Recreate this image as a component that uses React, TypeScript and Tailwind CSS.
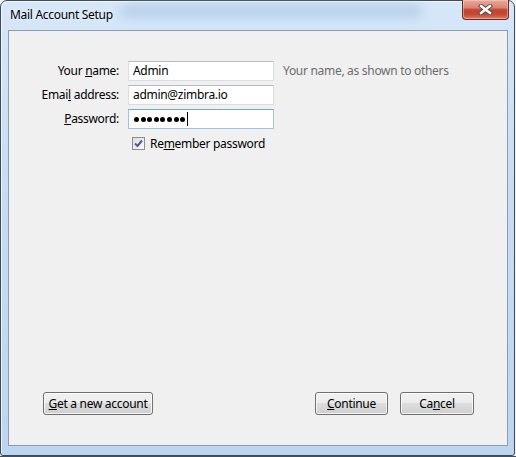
import React from 'react'

interface FieldProps {
  label: React.ReactNode
  children: React.ReactNode
  focused?: boolean
  hint?: string
}

const Field: React.FC<FieldProps> = ({ label, children, focused, hint }) => (
  <div className="flex items-center h-[20px]">
    <label className="w-[110px] text-right leading-none">{label}</label>
    <div
      className={`ml-[9px] w-[146px] h-[20px] border bg-white flex items-center pl-[4px] leading-none ${
        focused ? 'border-[#9cc2e6] border-t-[#6fa6db]' : 'border-[#dadde3] border-t-[#b7bac2]'
      }`}
    >
      {children}
    </div>
    {hint && <span className="ml-[9px] text-[#6d6d6d] leading-none">{hint}</span>}
  </div>
)

const WinButton: React.FC<{ width: string; children: React.ReactNode }> = ({ width, children }) => (
  <button
    className={`${width} h-[23px] rounded-[3px] border border-[#707070] bg-[linear-gradient(#f2f2f2_0%,#ebebeb_50%,#dddddd_50%,#cfcfcf_100%)] shadow-[inset_0_0_0_1px_rgba(255,255,255,0.75)] flex items-center justify-center leading-none text-black tracking-[-0.3px]`}
  >
    {children}
  </button>
)

export default function App() {
  return (
    <div className="w-[516px] h-[457px] bg-[#f3f3f3] flex flex-col font-['Noto_Sans',sans-serif] text-[12px] tracking-[-0.3px] text-black">
      <div className="w-[515px] h-[456px] border border-[#3e4a56] rounded-t-[7px] rounded-b-[3px] bg-[linear-gradient(180deg,#d6e7f8_0%,#c6ddf4_40%,#bcd6f1_100%)] flex flex-col shadow-[inset_1px_1px_0_rgba(255,255,255,0.7)]">
        {/* title bar */}
        <div className="relative h-[29px] flex items-start justify-between pl-[9px] pr-[5px]">
          <div className="absolute left-[120px] top-[5px] w-[300px] h-[10px] bg-[#9dbcdc] blur-[6px] opacity-70" />
          <span className="relative mt-[8px] text-[12px] leading-none [text-shadow:0_0_6px_rgba(255,255,255,0.9)]">
            Mail Account Setup
          </span>
          <div className="relative -mt-px w-[47px] h-[20px] rounded-b-[4px] border border-[#6e2a22] border-t-0 bg-[linear-gradient(180deg,#e9aa9c_0%,#d98574_40%,#c4432f_52%,#c34a34_75%,#db7a62_100%)] shadow-[inset_0_0_0_1px_rgba(255,220,210,0.45)] flex items-center justify-center">
            <svg width="15" height="11" viewBox="0 0 15 11">
              <path d="M3 2 L12 9 M12 2 L3 9" stroke="#4a4a4a" strokeWidth="4.2" strokeLinecap="square" fill="none" />
              <path d="M3 2 L12 9 M12 2 L3 9" stroke="#ffffff" strokeWidth="2.4" strokeLinecap="square" fill="none" />
            </svg>
          </div>
        </div>

        {/* client area */}
        <div className="ml-[7px] mr-[6px] w-[500px] h-[416px] border border-[#8d9cad] bg-[#f0f0f0] flex flex-col">
          <div className="pt-[30px] flex flex-col gap-[4px]">
            <Field
              label={
                <>
                  Your <u>n</u>ame:
                </>
              }
              hint="Your name, as shown to others"
            >
              Admin
            </Field>
            <Field
              label={
                <>
                  Emai<u>l</u> address:
                </>
              }
            >
              admin@zimbra.io
            </Field>
            <Field
              label={
                <>
                  <u>P</u>assword:
                </>
              }
              focused
            >
              <span className="flex items-center gap-[1.6px] pl-px">
                {Array.from({ length: 8 }).map((_, i) => (
                  <span key={i} className="w-[5px] h-[5px] rounded-full bg-black" />
                ))}
              </span>
              <span className="ml-[2px] w-px h-[14px] bg-black" />
            </Field>
          </div>

          <div className="mt-[8px] ml-[123px] flex items-center h-[13px]">
            <div className="w-[13px] h-[13px] border border-[#8e8f8f] bg-[linear-gradient(135deg,#dcdcdc,#fdfdfd)] flex items-center justify-center">
              <svg width="9" height="9" viewBox="0 0 9 9">
                <path d="M1 4.5 L3.5 7 L8 1.5" stroke="#4d5f8f" strokeWidth="2" fill="none" />
              </svg>
            </div>
            <span className="ml-[5px] leading-none">
              Re<u>m</u>ember password
            </span>
          </div>

          <div className="flex-1" />

          <div className="mb-[30px] pl-[34px] pr-[33px] flex items-center justify-between">
            <WinButton width="w-[110px]">
              <span>
                <u>G</u>et a new account
              </span>
            </WinButton>
            <div className="flex gap-[12px]">
              <WinButton width="w-[73px]">
                <span>
                  <u>C</u>ontinue
                </span>
              </WinButton>
              <WinButton width="w-[74px]">
                <span>
                  Ca<u>n</u>cel
                </span>
              </WinButton>
            </div>
          </div>
        </div>
      </div>
      <div className="h-px bg-[#4a4f55]" />
    </div>
  )
}
